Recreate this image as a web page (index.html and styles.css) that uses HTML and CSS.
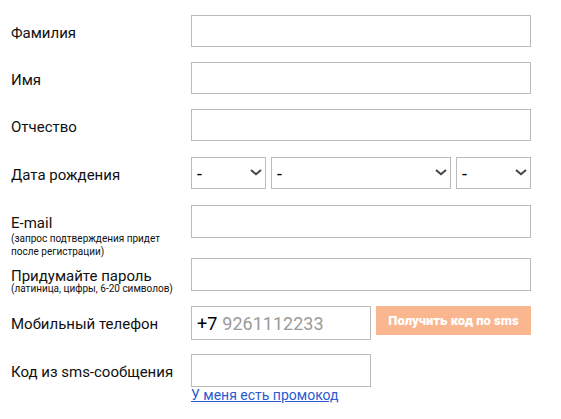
FILE: index.html
```html
<!DOCTYPE html>
<html lang="ru">
<head>
<meta charset="utf-8">
<meta name="viewport" content="width=device-width, initial-scale=1">
<title>Регистрация</title>
<link rel="stylesheet" href="styles.css">
</head>
<body>
<form class="form">
  <div class="row row-compact">
    <label class="label" for="surname">Фамилия</label>
    <input class="field" id="surname" type="text">
  </div>
  <div class="row row-compact">
    <label class="label" for="name">Имя</label>
    <input class="field" id="name" type="text">
  </div>
  <div class="row">
    <label class="label" for="patronymic">Отчество</label>
    <input class="field" id="patronymic" type="text">
  </div>
  <div class="row">
    <label class="label" for="day">Дата рождения</label>
    <div class="date">
      <div class="select">
        <select class="field field-select" id="day" aria-label="День"><option>-</option></select>
        <svg class="arrow" viewBox="0 0 12 7"><path d="M1 1 6 5.300 11 1"/></svg>
      </div>
      <div class="select">
        <select class="field field-select" id="month" aria-label="Месяц"><option>-</option></select>
        <svg class="arrow" viewBox="0 0 12 7"><path d="M1 1 6 5.300 11 1"/></svg>
      </div>
      <div class="select">
        <select class="field field-select" id="year" aria-label="Год"><option>-</option></select>
        <svg class="arrow" viewBox="0 0 12 7"><path d="M1 1 6 5.300 11 1"/></svg>
      </div>
    </div>
  </div>
  <div class="row">
    <label class="label" for="email">E-mail
      <span class="hint">(запрос подтверждения придет<br>после регистрации)</span>
    </label>
    <input class="field field-tall" id="email" type="email">
  </div>
  <div class="row">
    <label class="label" for="password">Придумайте пароль
      <span class="hint hint-tight">(латиница, цифры, 6-20 символов)</span>
    </label>
    <input class="field field-tall" id="password" type="password">
  </div>
  <div class="row">
    <label class="label" for="phone">Мобильный телефон</label>
    <div class="split">
      <div class="field phone">
        <span>+7</span>
        <input class="phone-input" id="phone" type="tel" placeholder="9261112233">
      </div>
      <button class="button" type="button">Получить код по sms</button>
    </div>
  </div>
  <div class="row">
    <label class="label" for="code">Код из sms-сообщения</label>
    <div class="split">
      <div class="code">
        <input class="field field-tall" id="code" type="text">
        <a class="promo" href="#">У меня есть промокод</a>
      </div>
    </div>
  </div>
</form>
</body>
</html>
```
FILE: styles.css
```css
* {
  box-sizing: border-box;
}

body {
  margin: 0;
  background: #fff;
  color: #111;
  font-family: Roboto, "Liberation Sans", sans-serif;
  font-size: 15px;
}

.form {
  padding: 15px 30px 0 11px;
}

.row {
  display: grid;
  grid-template-columns: 180px 1fr;
  align-items: start;
  min-height: 48px;
}

.row-compact {
  min-height: 47px;
}

.label {
  padding-top: 10px;
  line-height: 17px;
}

.hint {
  display: block;
  font-size: 10px;
  line-height: 13px;
}

.hint-tight {
  line-height: 8px;
}

.field {
  display: block;
  width: 100%;
  height: 32px;
  padding: 0 5px;
  border: 1px solid #bbb;
  border-radius: 0;
  background: #fff;
  color: #000;
  font-family: inherit;
  font-size: 18px;
}

.field-tall {
  height: 33px;
}

.date {
  display: grid;
  grid-template-columns: 75px 1fr 75px;
  gap: 5px;
}

.select {
  position: relative;
}

.field-select {
  appearance: none;
}

.arrow {
  position: absolute;
  top: 12px;
  right: 4px;
  width: 12px;
  height: 7px;
  fill: none;
  stroke: #444;
  stroke-width: 2;
  pointer-events: none;
}

.split {
  display: grid;
  grid-template-columns: minmax(0, 1fr) 155px;
  align-items: start;
  gap: 5px;
}

.phone {
  display: flex;
  align-items: center;
  gap: 5px;
  height: 34px;
}

.phone-input {
  flex: 1;
  width: 100%;
  min-width: 0;
  padding: 0;
  border: 0;
  background: none;
  color: #000;
  font: inherit;
}

.phone-input::placeholder {
  color: #9a9a9a;
}

.button {
  height: 29px;
  padding: 0;
  border: 0;
  background: #fab68e;
  color: #fff;
  font-family: inherit;
  font-size: 13px;
  font-weight: 900;
  white-space: nowrap;
}

.promo {
  display: block;
  color: #2a5bd0;
  font-size: 14px;
  line-height: 16px;
}
```
